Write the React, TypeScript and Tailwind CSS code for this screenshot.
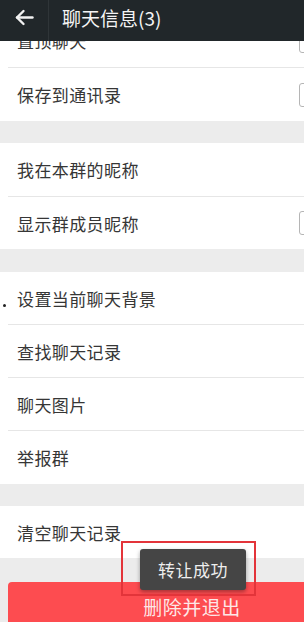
import React from "react";

const font = { fontFamily: '"Noto Sans CJK SC", "Noto Sans", sans-serif' };

function Checkbox() {
  return <div className="h-[24px] w-[24px] shrink-0 rounded-[3px] border-[1.5px] border-[#b5b5b5] bg-white" />;
}

function Row({ label, h, check }: { label: string; h: string; check?: boolean }) {
  return (
    <div className={`flex items-center justify-between bg-white pl-[17px] pr-[10px] ${h}`}>
      <span className="text-[17px] leading-none tracking-[0.4px] text-[#363636]">{label}</span>
      {check ? <Checkbox /> : null}
    </div>
  );
}

function Divider() {
  return (
    <div className="h-px bg-white pl-2">
      <div className="h-px bg-[#e6e6e6]" />
    </div>
  );
}

export default function App() {
  return (
    <div className="relative h-[622px] w-[304px] overflow-hidden bg-[#ececec]" style={font}>
      <div className="w-[333px] pt-[14px]">
        <Row label="置顶聊天" h="h-[53px]" check />
        <Divider />
        <Row label="保存到通讯录" h="h-[53px]" check />
        <div className="h-[22px]" />
        <Row label="我在本群的昵称" h="h-[53px]" />
        <Divider />
        <Row label="显示群成员昵称" h="h-[52px]" check />
        <div className="h-[23px]" />
        <Row label="设置当前聊天背景" h="h-[52px]" />
        <Divider />
        <Row label="查找聊天记录" h="h-[52px]" />
        <Divider />
        <Row label="聊天图片" h="h-[52px]" />
        <Divider />
        <Row label="举报群" h="h-[53px]" />
        <div className="h-[22px]" />
        <Row label="清空聊天记录" h="h-[52px]" />
        <div className="h-[24px]" />
        <div className="ml-2 flex h-[48px] w-[368px] items-center justify-center rounded-[4px] bg-[#fd4c50]">
          <span className="text-[19px] leading-none tracking-[0.5px] text-[#fde8e8]">删除并退出</span>
        </div>
      </div>

      {/* header overlays scrolled content */}
      <div className="absolute left-0 top-0 flex h-[41px] w-full items-center bg-[#21272a] pb-[6px]">
        <div className="flex w-[48px] items-center justify-center pl-[1px]">
          <svg width="19" height="17" viewBox="0 0 19 17" fill="none" stroke="#f2f2f2" strokeWidth="2.4" strokeLinecap="round" strokeLinejoin="round">
            <path d="M17.5 8.5H2" />
            <path d="M8.5 2L2 8.5L8.5 15" />
          </svg>
        </div>
        <div className="h-[41px] w-px -mb-[6px] self-start bg-[#2f3538]" />
        <span className="ml-[13px] text-[19px] leading-none text-[#f4f4f4]">聊天信息(3)</span>
      </div>

      {/* stray dot */}
      <div className="absolute left-[3px] top-[304px] h-[3px] w-[3px] rounded-full bg-[#222]" />

      {/* toast */}
      <div className="absolute left-[140px] top-[549px] flex h-[41px] w-[106px] items-center justify-center rounded-[3px] bg-[#454545] shadow-[0_2px_4px_rgba(0,0,0,0.35)]">
        <span className="text-[17px] leading-none tracking-[0.5px] text-[#eeeeee]">转让成功</span>
      </div>
      {/* red annotation frame */}
      <div className="absolute left-[121px] top-[541px] h-[55px] w-[135px] border-2 border-[#e3343a]" />
    </div>
  );
}
